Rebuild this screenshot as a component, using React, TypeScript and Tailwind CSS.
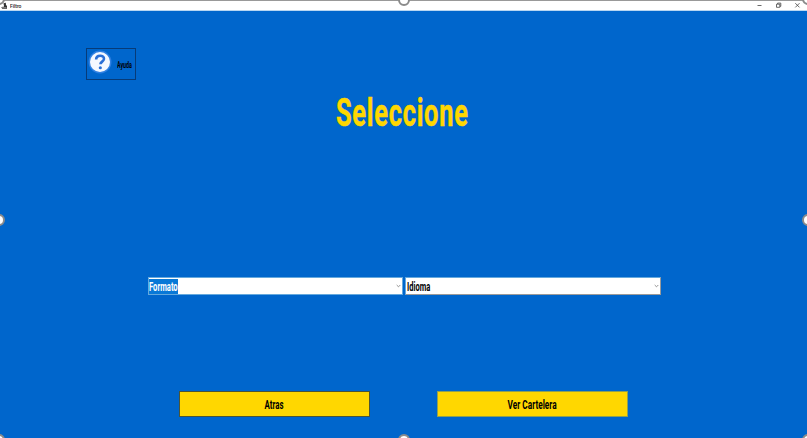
import React from "react";

function Handle({ className }: { className: string }) {
  return <span className={`absolute box-border h-[12px] w-[12px] rounded-full border-2 border-[#8b8b8b] bg-white ${className}`} />;
}

function Chevron() {
  return (
    <svg className="mr-[1px] h-[4px] w-[5px] shrink-0" viewBox="0 0 5 4" fill="none" stroke="#777" strokeWidth="0.8">
      <path d="M.7 1 2.5 2.8 4.3 1" />
    </svg>
  );
}

function TitleBar() {
  return (
    <header className="flex h-[11px] items-start justify-between border-b border-[#b9d7f2] bg-white">
      <div className="flex h-[11px] items-center">
        <svg className="ml-[1px] h-[8px] w-[7px]" viewBox="0 0 7 8" fill="#333">
          <path d="M2.5 1.2 4.8.8 5 3 6 4v2.8H1.2L.3 5.2l1.4-.5.8.4.5-1.2Z" />
          <path d="M1 5.6h4.5" stroke="#aaa" strokeWidth=".7" />
        </svg>
        <span className="ml-[2px] inline-block w-[14px] origin-left scale-x-[0.9] whitespace-nowrap text-[5.5px] font-medium leading-[10px] text-[#222]">Filtro</span>
      </div>
      <svg className="h-[10px] w-[54px]" viewBox="0 0 54 10" fill="none" stroke="#444" strokeWidth=".8">
        <path d="M4.5 5.5h4M42.3 3.2l4.2 4.2M46.5 3.2l-4.2 4.2" />
        <path d="M23.5 4.2h3.3v3.1h-3.3ZM24.6 4V3.1h3.2v3.2H27" />
      </svg>
    </header>
  );
}

export default function App() {
  return (
    <div className="relative flex h-[438px] w-[807px] flex-col overflow-hidden bg-[#0066cc] font-['Roboto','Liberation_Sans',sans-serif] text-black">
      <TitleBar />
      <main className="flex flex-1 flex-col">
        <button className="ml-[86px] mt-[37px] flex h-[32px] w-[50px] shrink-0 items-start border border-[#073b78]">
          <svg className="ml-[1px] mt-[1px] h-[24px] w-[24px] shrink-0" viewBox="0 0 23 23" fill="none">
            <circle cx="11.5" cy="11.5" r="11" fill="#2f80e2" />
            <circle cx="11.5" cy="11.5" r="9.6" fill="#f4f8ff" />
            <path d="M7.8 9.1C7.9 4.2 15.6 4.5 15.3 8.6c-.2 2.5-3.4 2.6-3.4 5.1" stroke="#2a6fd6" strokeWidth="2.5" />
            <circle cx="11.8" cy="17" r="1.5" fill="#2a6fd6" />
          </svg>
          <span className="ml-[5px] mt-[10px] inline-block w-[15px] origin-left scale-x-[0.59] whitespace-nowrap text-left text-[9px] font-bold leading-[12px]">Ayuda</span>
        </button>
        <h1 className="ml-[336px] mt-[10px] h-[46px] w-[133px] origin-left scale-x-[0.66] whitespace-nowrap text-[38.5px] font-bold leading-[46px] tracking-[1.1px] text-[#ffd700] [-webkit-text-stroke:0.5px_#ffd700]">Seleccione</h1>
        <section className="ml-[148px] mt-[141px] flex gap-[2px]">
          <div className="flex h-[18px] w-[255px] items-center justify-between border border-[#65a9dd] bg-white">
            <div className="h-[15px] w-[29px] bg-[#0878d7]">
              <span className="inline-block origin-left scale-x-[0.61] whitespace-nowrap align-top text-[12.5px] font-bold leading-[16px] text-white">Formato</span>
            </div>
            <Chevron />
          </div>
          <div className="flex h-[18px] w-[256px] items-center justify-between border border-[#9a9a9a] border-l-[#65a9dd] border-t-[#65a9dd] bg-white">
            <span className="ml-px inline-block origin-left scale-x-[0.6] whitespace-nowrap pt-[2px] text-[12.5px] font-bold leading-[16px]">Idioma</span>
            <Chevron />
          </div>
        </section>
        <section className="ml-[179px] mt-[96px] flex gap-[67px]">
          <button className="flex h-[26px] w-[191px] items-center justify-center border border-[#4b5536] bg-[#ffd700]">
            <span className="inline-block scale-x-[0.63] whitespace-nowrap pt-px text-[12.5px] font-bold leading-[16px]">Atras</span>
          </button>
          <button className="flex h-[26px] w-[191px] items-center justify-center border border-[#8fa052] bg-[#ffd700]">
            <span className="inline-block scale-x-[0.66] whitespace-nowrap pt-px text-[12.5px] font-bold leading-[16px]">Ver Cartelera</span>
          </button>
        </section>
      </main>
      <span className="absolute left-0 top-0 h-px w-full bg-[#999]" />
      <Handle className="-left-[7px] -top-[7px]" />
      <Handle className="left-[398px] -top-[6px]" />
      <Handle className="-right-[7px] -top-[7px]" />
      <Handle className="-left-[7px] top-[214px]" />
      <Handle className="-right-[7px] top-[214px]" />
      <Handle className="-left-[7px] top-[434px]" />
      <Handle className="left-[398px] top-[434px]" />
      <Handle className="-right-[7px] top-[434px]" />
    </div>
  );
}
